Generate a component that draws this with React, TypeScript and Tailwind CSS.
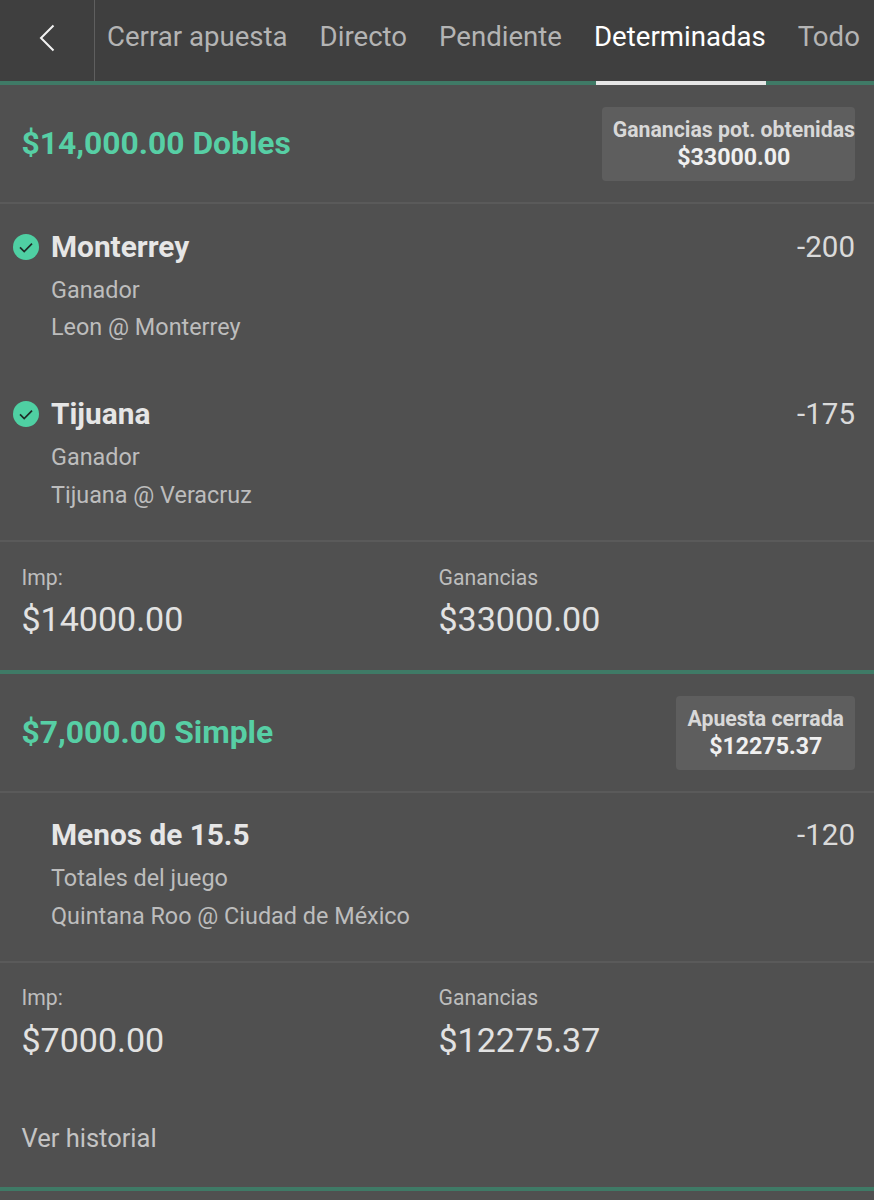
const font = { fontFamily: "Roboto, 'Noto Sans', sans-serif" };

function Check() {
  return (
    <svg width="26" height="26" viewBox="0 0 26 26" className="shrink-0">
      <circle cx="13" cy="13" r="13" fill="#4fd0a3" />
      <path d="M7 13.4l4.2 4.2L19 9.6" fill="none" stroke="#1f2b27" strokeWidth="1.7" />
    </svg>
  );
}

function Head({ title, label, amount, flush }: { title: string; label: string; amount: string; flush?: boolean }) {
  return (
    <div className="h-[117px] flex items-center justify-between pl-[21.5px] pr-[19px] border-b-2 border-[#5a5a5a] box-content">
      <div className="text-[31.8px] font-bold text-[#57cfa5] leading-none">{title}</div>
      <div className={`h-[74px] pl-[11px] ${flush ? "pr-0" : "pr-[11px]"} pt-[11px] bg-[#5e5e5e] rounded flex flex-col items-center`}>
        <div className="text-[21.25px] leading-[24px] font-bold text-[#d8d8d8] whitespace-nowrap">{label}</div>
        <div className="text-[23.2px] leading-[30px] font-bold text-[#f0f0f0]">{amount}</div>
      </div>
    </div>
  );
}

function Selection({ icon, name, market, game, odds, top }: { icon?: boolean; name: string; market: string; game: string; odds: string; top?: boolean }) {
  return (
    <div className={`h-[168px] ${top ? "pt-[25px]" : "pt-[24px]"} pr-[19px] flex`}>
      <div className="w-[51px] pl-[13px] pt-[5px] shrink-0">{icon && <Check />}</div>
      <div className="flex-1">
        <div className="text-[29.8px] leading-[36px] font-bold text-[#e6e6e6]">{name}</div>
        <div className="text-[23.4px] leading-[39px] mt-[6px] text-[#bdbdbd]">{market}</div>
        <div className={`text-[23.4px] leading-[39px] ${top ? "-mt-[2px]" : "-mt-[1px]"} text-[#bdbdbd]`}>{game}</div>
      </div>
      <div className="text-[29.5px] leading-[36px] text-[#dadada]">{odds}</div>
    </div>
  );
}

function Stats({ imp, gain, top }: { imp: string; gain: string; top?: boolean }) {
  return (
    <div className={`border-t-2 border-[#5a5a5a] pl-[21.5px] ${top ? "pt-[23px]" : "pt-[22px]"} flex`}>
      <div className="w-[417px]">
        <div className="text-[21.2px] leading-[26px] text-[#bdbdbd]">Imp:</div>
        <div className={`text-[34px] leading-[40px] ${top ? "mt-[8px]" : "mt-[9px]"} text-[#e2e2e2]`}>{imp}</div>
      </div>
      <div>
        <div className="text-[21.2px] leading-[26px] text-[#bdbdbd]">Ganancias</div>
        <div className={`text-[34px] leading-[40px] ${top ? "mt-[8px]" : "mt-[9px]"} text-[#e2e2e2]`}>{gain}</div>
      </div>
    </div>
  );
}

const GreenLine = () => <div className="h-[4px] bg-[#3f7a66]" />;

export default function App() {
  const tabs = [
    { t: "Cerrar apuesta" },
    { t: "Directo" },
    { t: "Pendiente" },
    { t: "Determinadas", active: true },
    { t: "Todo" },
  ];
  return (
    <div style={font} className="w-[874px] h-[1200px] overflow-hidden bg-[#505050]">
      <div className="h-[81px] bg-[#3f3f3f] flex">
        <div className="w-[95px] border-r border-[#5f5f5f] flex items-center justify-center shrink-0 pb-[6px]">
          <svg width="16" height="28" viewBox="0 0 16 28">
            <path d="M14.5 1.5L2 14l12.5 12.5" fill="none" stroke="#f2f2f2" strokeWidth="2" />
          </svg>
        </div>
        <div className="flex pl-[12px] gap-[32px] whitespace-nowrap">
          {tabs.map((x) => (
            <div key={x.t} className={`text-[27.6px] leading-[74px] ${x.active ? "text-white" : "text-[#b4b4b4]"}`}>{x.t}</div>
          ))}
        </div>
      </div>
      <div className="h-[4px] bg-[#3f7a66] flex">
        <div className="w-[596px]" />
        <div className="w-[170px] bg-[#e6e6e6]" />
      </div>

      <div className="h-[585px]">
        <Head flush title="$14,000.00 Dobles" label="Ganancias pot. obtenidas" amount="$33000.00" />
        <Selection top icon name="Monterrey" market="Ganador" game="Leon @ Monterrey" odds="-200" />
        <Selection icon name="Tijuana" market="Ganador" game="Tijuana @ Veracruz" odds="-175" />
        <Stats top imp="$14000.00" gain="$33000.00" />
      </div>
      <GreenLine />
      <div className="h-[513px]">
        <Head title="$7,000.00 Simple" label="Apuesta cerrada" amount="$12275.37" />
        <Selection name="Menos de 15.5" market="Totales del juego" game="Quintana Roo @ Ciudad de México" odds="-120" />
        <Stats imp="$7000.00" gain="$12275.37" />
        <div className="pl-[21.5px] mt-[60px] text-[25.5px] leading-[36px] text-[#c4c4c4]">Ver historial</div>
      </div>
      <GreenLine />
    </div>
  );
}
